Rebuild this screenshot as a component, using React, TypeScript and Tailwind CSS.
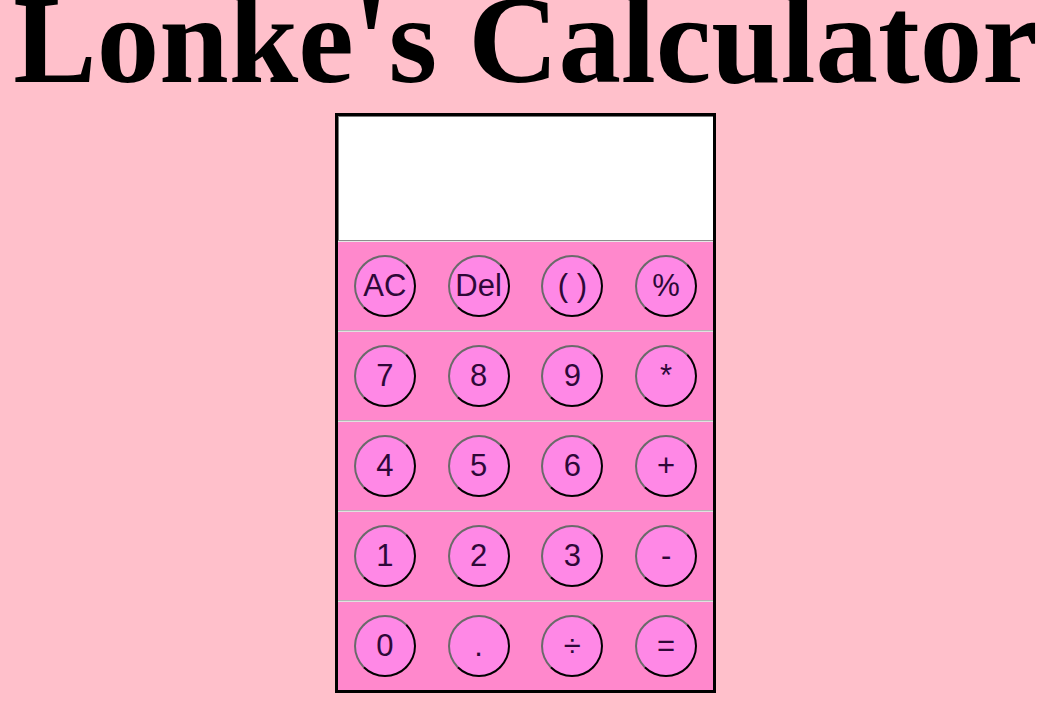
import React from "react";

const rows: string[][] = [
  ["AC", "Del", "( )", "%"],
  ["7", "8", "9", "*"],
  ["4", "5", "6", "+"],
  ["1", "2", "3", "-"],
  ["0", ".", "÷", "="],
];

export default function App() {
  return (
    <div className="min-h-[705px] w-full bg-[#ffc0cb] overflow-hidden">
      <h1
        className="m-0 text-center font-bold text-black text-[125px] leading-[80px] mb-[33px] whitespace-nowrap"
        style={{ fontFamily: '"Liberation Serif", "Times New Roman", serif' }}
      >
        Lonke's Calculator
      </h1>
      <div className="mx-auto w-[381px] border-[3px] border-black flex flex-col">
        <div className="h-[124px] bg-white border-t border-l border-[#7a7a7a]" />
        {rows.map((row, i) => (
          <div
            key={i}
            className={
              i === 0
                ? "h-[90px] bg-[#ff88cc] border-t border-t-[#8c8c8c] grid grid-cols-4 items-center justify-items-center shadow-[inset_0_1px_0_#e6e6e6]"
                : "h-[90px] bg-[#ff88cc] border-t border-t-[#b5b5b5] grid grid-cols-4 items-center justify-items-center shadow-[inset_0_1px_0_#e0e0e0]"
            }
          >
            {row.map((k) => (
              <button
                key={k}
                className="w-[62px] h-[62px] rounded-full bg-[#ff88e6] border-2 border-t-[#6a6a6a] border-l-[#6a6a6a] border-r-black border-b-black text-[31px] leading-none text-[#2e0838] flex items-center justify-center p-0"
                style={{ fontFamily: '"Liberation Sans", Arial, sans-serif' }}
              >
                {k}
              </button>
            ))}
          </div>
        ))}
      </div>
    </div>
  );
}
